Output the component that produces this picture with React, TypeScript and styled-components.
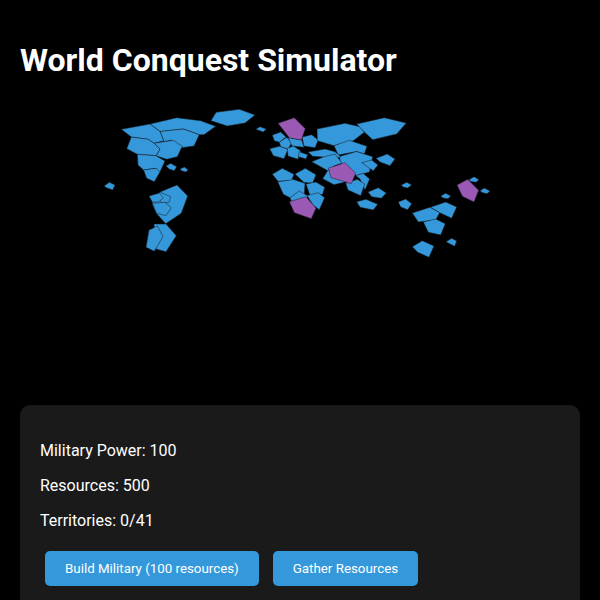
import React, { useState } from "react";
import styled, { createGlobalStyle } from "styled-components";

const GlobalStyle = createGlobalStyle`
  body {
    margin: 0;
    background: #000;
    color: #fff;
    font-family: Roboto, "Liberation Sans", sans-serif;
    font-size: 16px;
  }
`;

const Page = styled.main`
  padding: 20px;
`;

const Title = styled.h1`
  margin: 21px 0;
  font-size: 32px;
  line-height: 38px;
  font-weight: 700;
`;

const WorldMap = styled.svg`
  display: block;
  width: 100%;
  margin-bottom: 20px;
`;

const Territory = styled.polygon<{ $rival: boolean }>`
  fill: ${(p) => (p.$rival ? "#9b59b6" : "#3498db")};
  stroke: #1a1a1a;
  stroke-width: 0.5;
  cursor: pointer;
`;

const Panel = styled.section`
  padding: 20px;
  background: #1a1a1a;
  border-radius: 10px;
`;

const Stat = styled.p`
  margin: 16px 0;
  line-height: 19px;
`;

const Actions = styled.div`
  display: flex;
  flex-wrap: wrap;
  gap: 14px;
  padding: 5px;
`;

const ActionButton = styled.button`
  padding: 10px 20px;
  border: 0;
  border-radius: 5px;
  background: #3498db;
  color: #fff;
  font-family: inherit;
  line-height: 15px;
  cursor: pointer;
`;

type Region = { points: string; rival?: boolean };

const regions: Region[] = [
  // North America
  { points: "150,124 176.7,117.7 200.7,120.7 215.7,126.3 204,134.7 199.3,134.7 183.3,129 160,131.5" },
  { points: "160,131.5 183.3,129 199.3,134.7 194,146 181.7,147.7 171.7,140.3 154,143.3 163.7,140.7" },
  { points: "121.3,129.3 150,124 160,131.5 163.7,140.7 154,143.3 148.3,139.3 131.3,137" },
  { points: "154,143.3 173.3,140.3 182.3,146.3 177.3,156.7 166.7,159.3 156,155.7 160,149" },
  { points: "131.3,137 148.3,139.3 154,143.3 160,149 156,155.7 137.3,154.3 126.7,148.7" },
  { points: "137.3,154.3 156,155.7 165,161 159.5,173 156,168.3 143.5,170 138,165" },
  { points: "143.5,170 156,168.3 160,172 154.3,181.7 146.7,178.3" },
  { points: "166,166 170.7,163.3 176.7,166.7 174.3,170.7 169,169" },
  { points: "180,169 184.3,167 188,169.7 186,172 182,171" },
  { points: "104,186 109.3,182.3 115,185 112.7,190 107,188" },
  { points: "211,120.7 216,112.3 239.3,109.3 255,115 245,123 227.3,126" },
  { points: "255.7,129.3 260,126.7 266.3,129 263.3,132" },
  // South America
  { points: "160,192 177,185 187.7,196 181.3,213.3 165.7,223.7 156,213 152,203" },
  { points: "160,192 170.7,196.7 169,202.3 162,203 157,197" },
  { points: "149,196 159.5,193 163.3,198 158.5,202 152.3,202" },
  { points: "152.3,203.3 165,202.3 171.3,207.7 166,215.7 156.7,213.3" },
  { points: "154,224 166,224 176.3,235.7 166,251.7 156,249" },
  { points: "149,230 157.5,226 163,236.7 154.3,251.3 146,247.3" },
  // Europe
  { points: "272.3,135 280.7,132 286,137 279.3,142.3 274.3,140.7" },
  { points: "279.3,142.3 286.7,137.3 291.7,142.7 288,149.3 280.7,146.7" },
  { points: "288,137.5 301.7,140 304,147.3 292,146" },
  { points: "302,137 311.7,134.7 318.3,140 315,147.7 304,146" },
  { points: "269.7,148.7 279.3,146.3 288,149.3 284,158.7 273.3,155.7" },
  { points: "287.3,148.3 293.3,146 300.7,150.7 298,159.3 288,156" },
  { points: "299.3,151.7 307.7,154.7 306,159 298.3,156.7" },
  { points: "278,123.3 294.3,117.7 305.3,128.7 301.3,140 289.3,137.7", rival: true },
  // Asia
  { points: "317,129 345,123.3 360,126.7 364.3,132.3 353.3,140.7 334,145.7 317.3,140.7" },
  { points: "356.7,124 384.3,117.7 406.3,123 396.7,134 372.7,139.7 364.3,132" },
  { points: "334,145.7 349.3,140.3 367,146.3 364.3,154 356.7,151.5 338.3,155" },
  { points: "339.5,156.5 356.5,151.5 372.7,156.7 369.5,172 356.5,175.5 341,166" },
  { points: "308,152 325,149 335,151.7 340.5,156.5 333,160 323.3,157 312.7,156.3" },
  { points: "311.7,161.7 323.3,157 335,154 342,163 334,166 328.3,171" },
  { points: "322.7,178.7 328,170 344,176 345,182 334,184.7" },
  { points: "355.5,175.5 363.3,173.5 369.7,179 365,190 360,179" },
  { points: "345.7,183.3 357.3,179.3 364.7,184 360.7,195.7 348,190" },
  { points: "361.7,162.7 371.7,160 378,165 373.3,170.7 369,168" },
  { points: "376,158.3 387.3,154 395,159 390,165.7 380,162" },
  { points: "368,192 378.3,187.7 386.3,193 381.3,198.3 371.7,196.7" },
  { points: "356.7,201.7 366,199.3 377.7,204.3 373.3,210 360,207.3" },
  { points: "328.5,168 345,162.7 355.7,173.3 351.3,183.7 331,177.7", rival: true },
  // Africa
  { points: "277.7,181.7 292.7,179.3 305,183.3 304.3,195 290,197.7 283.3,194.3" },
  { points: "272.3,174.3 282.3,168.3 294,174.3 291.7,180 278,181.3" },
  { points: "295,174 305.3,168.3 316,174.7 312.7,183 304,182.5" },
  { points: "306,184 316,182 324.7,187.3 322.7,194.3 310,195.5" },
  { points: "307,195.5 318.3,192.7 324.7,197.7 319.3,209.7 313,205" },
  { points: "290,197.7 299.3,191 308,196 306,199 292,203" },
  { points: "289.3,201.7 306,196.7 316,208.3 311.3,218.7 294.3,212.7", rival: true },
  // Oceania
  { points: "401.3,185 406.7,182.3 411.7,185 407.7,188 403,187" },
  { points: "398.3,202 405.7,199 411.7,203.7 407.7,209.7 400.7,207" },
  { points: "440.7,196 445.7,193.3 450.7,196 448,198.7 443,198" },
  { points: "468.5,180 474,176.7 479,179.7 476,182.3 471,181.5" },
  { points: "480,190.7 484.3,188 490,191 487,193.7 482,192.5" },
  { points: "457,185 467.7,179.3 478.7,190.3 474,202 462.3,196.3", rival: true },
  { points: "430.3,207.3 445.7,202 456.7,207 451.7,218.3 439.7,212.7" },
  { points: "412.3,213 430,207.3 439.7,212.7 435.7,220 418.3,222" },
  { points: "423.3,222 435.7,219 445.3,223.7 440.7,235 428.3,232.3" },
  { points: "412.3,246.7 422.3,240.7 434,246 429,257.3 417.7,252.3" },
  { points: "446,241.7 451.7,238.3 456.7,241 454.7,246.3 450,244" },
];

export default function App() {
  const [military, setMilitary] = useState(100);
  const [resources, setResources] = useState(500);

  const buildMilitary = () => {
    if (resources < 100) return;
    setResources(resources - 100);
    setMilitary(military + 50);
  };

  return (
    <>
      <GlobalStyle />
      <Page>
        <Title>World Conquest Simulator</Title>
        <WorldMap viewBox="20 100 560 285" role="img" aria-label="World map">
          {regions.map((region) => (
            <Territory key={region.points} points={region.points} $rival={!!region.rival} />
          ))}
        </WorldMap>
        <Panel>
          <Stat>Military Power: {military}</Stat>
          <Stat>Resources: {resources}</Stat>
          <Stat>Territories: 0/41</Stat>
          <Actions>
            <ActionButton type="button" onClick={buildMilitary}>
              Build Military (100 resources)
            </ActionButton>
            <ActionButton type="button" onClick={() => setResources(resources + 50)}>
              Gather Resources
            </ActionButton>
          </Actions>
        </Panel>
      </Page>
    </>
  );
}
